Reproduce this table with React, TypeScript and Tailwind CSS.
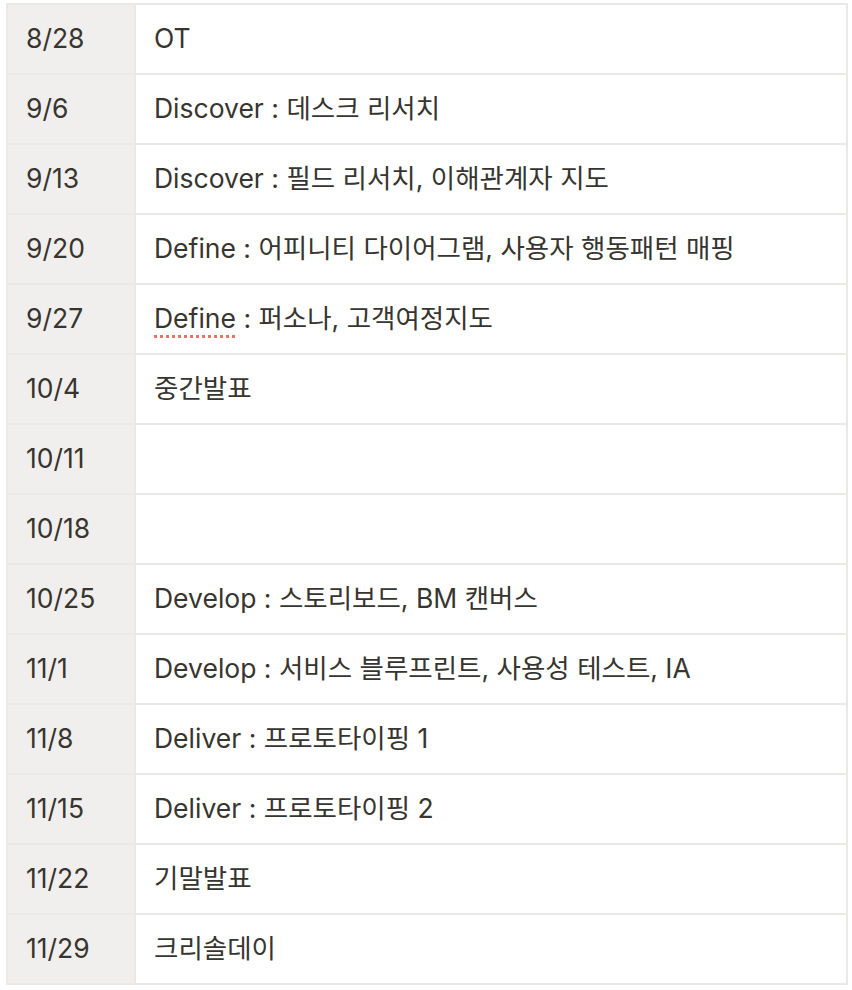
import React from 'react';

const rows: { date: string; text: React.ReactNode }[] = [
    { date: '8/28', text: 'OT' },
    { date: '9/6', text: 'Discover : 데스크 리서치' },
    { date: '9/13', text: 'Discover : 필드 리서치, 이해관계자 지도' },
    { date: '9/20', text: 'Define : 어피니티 다이어그램, 사용자 행동패턴 매핑' },
    {
        date: '9/27',
        text: (
            <span>
                <span className="underline decoration-dotted decoration-[#e8716a] decoration-[3px] underline-offset-[7px]">Define</span>
                {' : 퍼소나, 고객여정지도'}
            </span>
        ),
    },
    { date: '10/4', text: '중간발표' },
    { date: '10/11', text: '' },
    { date: '10/18', text: '' },
    { date: '10/25', text: 'Develop : 스토리보드, BM 캔버스' },
    { date: '11/1', text: 'Develop : 서비스 블루프린트, 사용성 테스트, IA' },
    { date: '11/8', text: 'Deliver : 프로토타이핑 1' },
    { date: '11/15', text: 'Deliver : 프로토타이핑 2' },
    { date: '11/22', text: '기말발표' },
    { date: '11/29', text: '크리솔데이' },
];

const App: React.FC = () => {
    return (
        <div className="min-h-screen bg-white pt-[3px] pl-[6px]" style={{ fontFamily: 'Inter, "Noto Sans CJK KR", sans-serif' }}>
            {/* Schedule table */}
            <div className="w-[842px] border-l-2 border-r-2 border-b-2 border-[#e9e9e7] text-[#37352f] text-[26.5px]">
                {rows.map((row) => (
                    <div key={row.date} className="flex h-[70px] border-t-2 border-[#e9e9e7]">
                        <div className="flex items-center w-[128px] shrink-0 pl-[18px] bg-[#f1efed] border-r-2 border-[#e9e9e7]">{row.date}</div>
                        <div className="flex items-center flex-1 pl-[18px]">{row.text}</div>
                    </div>
                ))}
            </div>
        </div>
    );
};

export default App;
